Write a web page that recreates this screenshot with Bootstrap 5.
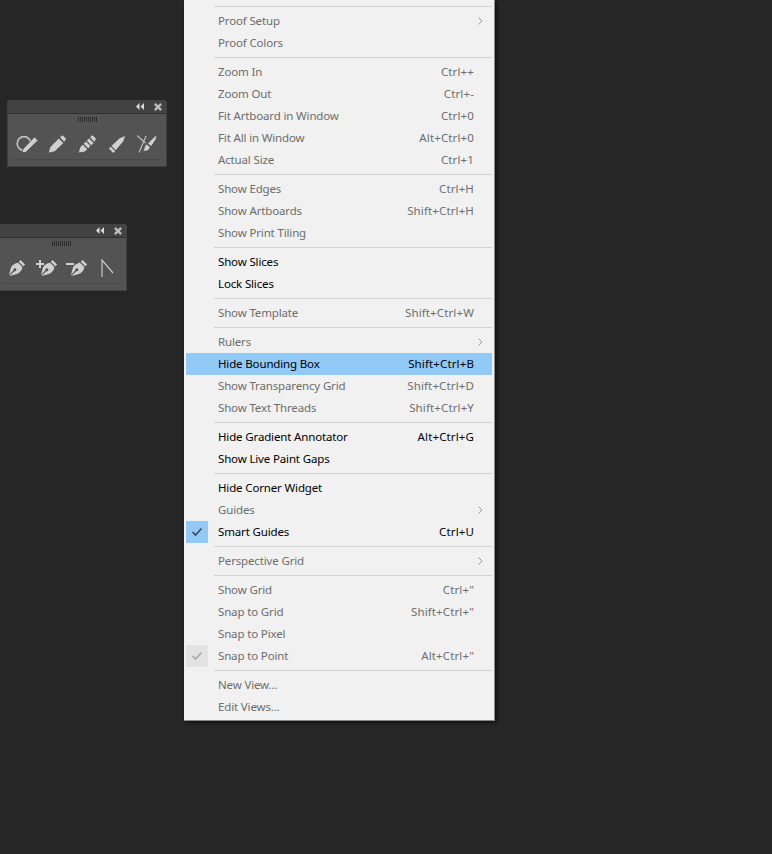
<!DOCTYPE html>
<html lang="en">
<head>
    <meta charset="UTF-8">
    <meta name="viewport" content="width=device-width, initial-scale=1.0">
    <title>View menu</title>
    <link href="https://cdn.jsdelivr.net/npm/bootstrap@5.3.0/dist/css/bootstrap.min.css" rel="stylesheet">
    <style>
        body {
            background-color: #262626;
            height: 854px;
            overflow: hidden;
            font-family: "Noto Sans", "Open Sans", sans-serif;
        }
        .tool-panel {
            position: absolute;
            background-color: #535353;
            border: 1px solid #404040;
            border-top: 0;
            border-radius: 3px 3px 0 0;
            height: 67px;
        }
        .panel-one { left: 7px; top: 100px; width: 160px; }
        .panel-two { left: -4px; top: 224px; width: 131px; }
        .panel-head {
            height: 14px;
            background-color: #434343;
            border-bottom: 1px solid #2f2f2f;
            border-radius: 3px 3px 0 0;
            gap: 10px;
            padding-right: 4px;
        }
        .panel-grip {
            width: 19px;
            height: 5px;
            margin: 3px auto 0;
            background: repeating-linear-gradient(90deg, #2e2e2e 0 1px, transparent 1px 2px);
        }
        .panel-icons { height: 37px; align-items: center; padding-top: 7px; }
        .panel-one .panel-icons { padding-left: 4px; }
        .panel-two .panel-icons { padding-left: 5px; }
        .tool-icon { width: 30px; text-align: center; }
        .tool-icon svg { display: block; margin: 0 auto; fill: #d0d0d0; }
        .panel-rule { height: 1px; background-color: #484848; margin: 0 4px; }

        .view-menu {
            position: absolute;
            left: 184px;
            top: 0;
            width: 311px;
            height: 721px;
            background-color: #f1f1f1;
            padding: 3px 2px 0 2px;
            border-right: 1px solid #8a8a8a;
            border-bottom: 1px solid #8a8a8a;
            box-shadow: 2px 2px 3px rgba(0, 0, 0, .55);
            font-size: 11.5px;
            letter-spacing: -.15px;
            color: #6d6d6d;
        }
        .menu-row {
            position: relative;
            height: 22px;
            line-height: 21px;
            padding-left: 32px;
            padding-right: 18px;
        }
        .menu-row.on { color: #000; }
        .menu-row.hot { background-color: #91c9f7; color: #000; }
        .menu-key { letter-spacing: .13px; }
        .menu-arrow {
            position: absolute;
            right: 9px;
            top: 7px;
            width: 5px;
            height: 8px;
            fill: none;
            stroke: #9a9a9a;
        }
        .menu-check {
            position: absolute;
            left: 0;
            top: 0;
            width: 22px;
            height: 22px;
            padding: 6px 5px;
        }
        .menu-check svg { display: block; fill: none; stroke-width: 1.6; }
        .check-hot { background-color: #91c9f7; }
        .check-hot svg { stroke: #3d4b57; }
        .check-dim { background-color: #e3e3e3; }
        .check-dim svg { stroke: #a8a8a8; }
        .menu-gap { height: 7px; padding: 3px 0 3px 28px; }
        .menu-gap div { height: 1px; background-color: #d3d3d3; }
    </style>
</head>
<body>
    <svg width="0" height="0" class="position-absolute">
        <symbol id="pencil" viewBox="0 0 20 20">
            <path d="M1 19.500l1.500-6L12 4l5 5-9.500 9z M13.500 2.500l1.500-1.500c.8-.5 1.500-.5 2 0l2.500 2.500c.5.6.4 1.300 0 1.800L18 7.500z"/>
        </symbol>
        <symbol id="nib" viewBox="0 0 20 20">
            <path d="M14 1l5 5-2 2-5-5z M11 4l5 5c-.5 4-3 7-7 8l-7.500 2 5.500-5.500a1.700 1.700 0 1 0-1-1L1 18l2-7.500C4 7 8 5 11 4z"/>
        </symbol>
    </svg>

    <!-- pencil group -->
    <div class="tool-panel panel-one">
        <div class="panel-head d-flex justify-content-end align-items-center">
            <svg width="8" height="7" viewBox="0 0 8 7" fill="#d8d8d8"><path d="M0 3.500L3.500 0v7z M4.500 3.500L8 0v7z"/></svg>
            <svg width="8" height="8" viewBox="0 0 9 9" stroke="#bdbdbd" stroke-width="2.600"><path d="M1 1l7 7M8 1L1 8"/></svg>
        </div>
        <div class="panel-grip"></div>
        <div class="panel-icons d-flex">
            <div class="tool-icon">
                <svg width="22" height="18" viewBox="0 0 22 18">
                    <circle cx="8" cy="8.500" r="6.800" fill="none" stroke="#c0c0c0" stroke-width="1.700"/>
                    <path stroke="#535353" stroke-width=".8" d="M6 17.500l1-3.500L18.500 2 22 5.500 9.500 17.500z"/>
                </svg>
            </div>
            <div class="tool-icon"><svg width="18" height="18"><use href="#pencil"/></svg></div>
            <div class="tool-icon">
                <svg width="18" height="18" viewBox="0 0 20 20">
                    <path d="M1 19.500l1.500-6 2.800-2.800 5 5-2.800 2.500z M6.300 9.800l2.500-2.500 5 5-2.500 2.500z M9.800 6.300L12.300 4l5 5-2.500 2.500z M13.500 2.500l1.500-1.500c.8-.5 1.500-.5 2 0l2.500 2.500c.5.6.4 1.300 0 1.800L18 7.500z"/>
                </svg>
            </div>
            <div class="tool-icon">
                <svg width="18" height="18" viewBox="0 0 20 20">
                    <path d="M1 15l2-2 5 5-2 2z M4 12L13 3.500 19 1l-2 6-8.500 10z"/>
                </svg>
            </div>
            <div class="tool-icon">
                <svg width="20" height="18" viewBox="0 0 20 18">
                    <path d="M0 .5l8.500 7.500M9 1L2 17.500" fill="none" stroke="#c4c4c4" stroke-width="1.100"/>
                    <path d="M11 8.500L17 2.500l2.500-2-.8 3.500-4.500 7z M9.500 9.500l3.300 2.400c-.5 3-3.500 4.500-6.800 3.800 2-1 1.500-5 3.500-6.200z"/>
                </svg>
            </div>
        </div>
        <div class="panel-rule"></div>
    </div>

    <!-- pen group -->
    <div class="tool-panel panel-two">
        <div class="panel-head d-flex justify-content-end align-items-center">
            <svg width="8" height="7" viewBox="0 0 8 7" fill="#d8d8d8"><path d="M0 3.500L3.500 0v7z M4.500 3.500L8 0v7z"/></svg>
            <svg width="8" height="8" viewBox="0 0 9 9" stroke="#bdbdbd" stroke-width="2.600"><path d="M1 1l7 7M8 1L1 8"/></svg>
        </div>
        <div class="panel-grip"></div>
        <div class="panel-icons d-flex">
            <div class="tool-icon"><svg width="18" height="18"><use href="#nib"/></svg></div>
            <div class="tool-icon">
                <svg width="22" height="18" viewBox="0 0 22 18">
                    <path d="M0 4h3V1h2v3h3v2H5v3H3V6H0z"/>
                    <use href="#nib" x="4" y="0" width="18" height="18"/>
                </svg>
            </div>
            <div class="tool-icon">
                <svg width="22" height="18" viewBox="0 0 22 18">
                    <path d="M0 4h8v2H0z"/>
                    <use href="#nib" x="4" y="0" width="18" height="18"/>
                </svg>
            </div>
            <div class="tool-icon">
                <svg width="14" height="18" viewBox="0 0 14 18" stroke="#c8c8c8" stroke-width="1.200"><path fill="#535353" d="M2 18V1l11 13"/></svg>
            </div>
        </div>
        <div class="panel-rule"></div>
    </div>

    <div class="view-menu">
        <div class="menu-gap"><div></div></div>
        <div class="menu-row d-flex justify-content-between"><span>Proof Setup</span><svg class="menu-arrow" viewBox="0 0 5 8"><path d="M.5.500L4 4 .5 7.500"/></svg></div>
        <div class="menu-row d-flex justify-content-between"><span>Proof Colors</span></div>
        <div class="menu-gap"><div></div></div>
        <div class="menu-row d-flex justify-content-between"><span>Zoom In</span><span class="menu-key">Ctrl++</span></div>
        <div class="menu-row d-flex justify-content-between"><span>Zoom Out</span><span class="menu-key">Ctrl+-</span></div>
        <div class="menu-row d-flex justify-content-between"><span>Fit Artboard in Window</span><span class="menu-key">Ctrl+0</span></div>
        <div class="menu-row d-flex justify-content-between"><span>Fit All in Window</span><span class="menu-key">Alt+Ctrl+0</span></div>
        <div class="menu-row d-flex justify-content-between"><span>Actual Size</span><span class="menu-key">Ctrl+1</span></div>
        <div class="menu-gap"><div></div></div>
        <div class="menu-row d-flex justify-content-between"><span>Show Edges</span><span class="menu-key">Ctrl+H</span></div>
        <div class="menu-row d-flex justify-content-between"><span>Show Artboards</span><span class="menu-key">Shift+Ctrl+H</span></div>
        <div class="menu-row d-flex justify-content-between"><span>Show Print Tiling</span></div>
        <div class="menu-gap"><div></div></div>
        <div class="menu-row on d-flex justify-content-between"><span>Show Slices</span></div>
        <div class="menu-row on d-flex justify-content-between"><span>Lock Slices</span></div>
        <div class="menu-gap"><div></div></div>
        <div class="menu-row d-flex justify-content-between"><span>Show Template</span><span class="menu-key">Shift+Ctrl+W</span></div>
        <div class="menu-gap"><div></div></div>
        <div class="menu-row d-flex justify-content-between"><span>Rulers</span><svg class="menu-arrow" viewBox="0 0 5 8"><path d="M.5.500L4 4 .5 7.500"/></svg></div>
        <div class="menu-row hot d-flex justify-content-between"><span>Hide Bounding Box</span><span class="menu-key">Shift+Ctrl+B</span></div>
        <div class="menu-row d-flex justify-content-between"><span>Show Transparency Grid</span><span class="menu-key">Shift+Ctrl+D</span></div>
        <div class="menu-row d-flex justify-content-between"><span>Show Text Threads</span><span class="menu-key">Shift+Ctrl+Y</span></div>
        <div class="menu-gap"><div></div></div>
        <div class="menu-row on d-flex justify-content-between"><span>Hide Gradient Annotator</span><span class="menu-key">Alt+Ctrl+G</span></div>
        <div class="menu-row on d-flex justify-content-between"><span>Show Live Paint Gaps</span></div>
        <div class="menu-gap"><div></div></div>
        <div class="menu-row on d-flex justify-content-between"><span>Hide Corner Widget</span></div>
        <div class="menu-row d-flex justify-content-between"><span>Guides</span><svg class="menu-arrow" viewBox="0 0 5 8"><path d="M.5.500L4 4 .5 7.500"/></svg></div>
        <div class="menu-row on d-flex justify-content-between">
            <div class="menu-check check-hot"><svg width="12" height="10" viewBox="0 0 12 10"><path d="M1.500 5l3 3 6-6.500"/></svg></div>
            <span>Smart Guides</span><span class="menu-key">Ctrl+U</span>
        </div>
        <div class="menu-gap"><div></div></div>
        <div class="menu-row d-flex justify-content-between"><span>Perspective Grid</span><svg class="menu-arrow" viewBox="0 0 5 8"><path d="M.5.500L4 4 .5 7.500"/></svg></div>
        <div class="menu-gap"><div></div></div>
        <div class="menu-row d-flex justify-content-between"><span>Show Grid</span><span class="menu-key">Ctrl+"</span></div>
        <div class="menu-row d-flex justify-content-between"><span>Snap to Grid</span><span class="menu-key">Shift+Ctrl+"</span></div>
        <div class="menu-row d-flex justify-content-between"><span>Snap to Pixel</span></div>
        <div class="menu-row d-flex justify-content-between">
            <div class="menu-check check-dim"><svg width="12" height="10" viewBox="0 0 12 10"><path d="M1.500 5l3 3 6-6.500"/></svg></div>
            <span>Snap to Point</span><span class="menu-key">Alt+Ctrl+"</span>
        </div>
        <div class="menu-gap"><div></div></div>
        <div class="menu-row d-flex justify-content-between"><span>New View...</span></div>
        <div class="menu-row d-flex justify-content-between"><span>Edit Views...</span></div>
    </div>

    <script src="https://cdn.jsdelivr.net/npm/bootstrap@5.3.0/dist/js/bootstrap.bundle.min.js"></script>
</body>
</html>
